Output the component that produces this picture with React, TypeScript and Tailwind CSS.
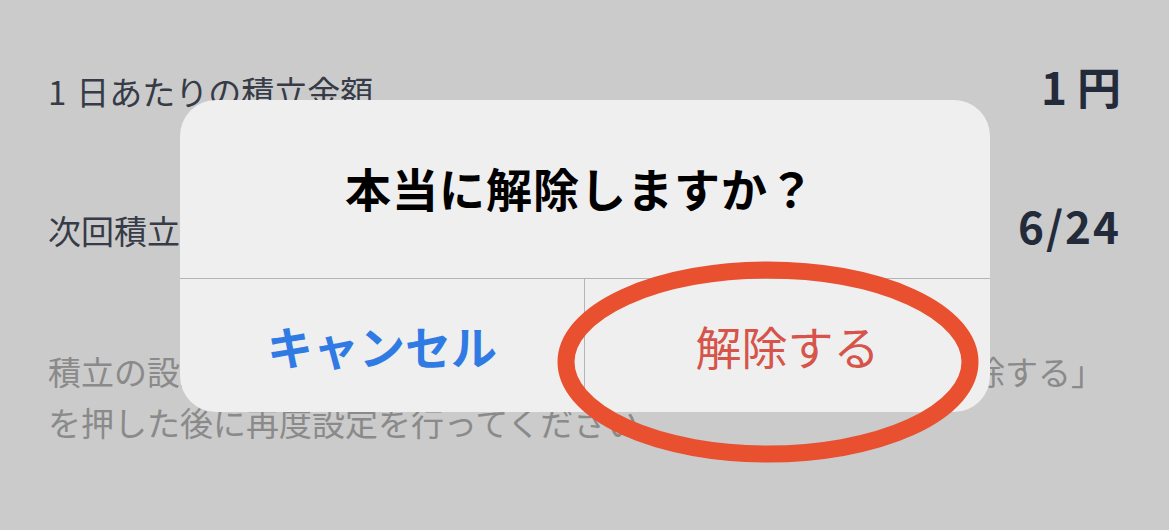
const jp = { fontFamily: '"Noto Sans CJK JP", "Noto Sans", sans-serif' }

export default function App() {
  return (
    <div className="relative h-[530px] w-[1169px] overflow-hidden bg-[#cbcbcb]" style={jp}>
      {/* 積立設定の画面（背景） */}
      <div className="flex flex-col px-12 pt-[61px]">
        <div className="flex h-[50px] items-baseline justify-between">
          <span className="text-[33px] leading-[50px] text-[#363b47]">
            <span className="pr-[10px]">1</span>日あたりの積立金額
          </span>
          <span className="text-[44px] font-bold leading-[50px] text-[#232a3a]">1 円</span>
        </div>
        <div className="mt-[89px] flex h-[50px] items-baseline justify-between">
          <span className="text-[33px] leading-[50px] text-[#363b47]">次回積立日</span>
          <span className="text-[44px] font-bold leading-[50px] tracking-[2px] text-[#232a3a]">6/24</span>
        </div>
        <p className="mt-[96px] whitespace-nowrap text-[33px] leading-[51px] text-[#8a8a8a]">
          積立の設定を変更したい場合は、お手数ですが一度「積立を解除する」
          <br />
          を押した後に再度設定を行ってください。
        </p>
      </div>

      {/* 確認ダイアログ */}
      <div className="absolute left-[180px] top-[100px] flex h-[312px] w-[810px] flex-col overflow-hidden rounded-[36px] bg-[#efefef]">
        <div className="flex h-[179px] items-center justify-center border-b border-[#b4b4b4] pb-[4px]">
          <span className="pr-[10px] text-[46px] font-bold tracking-[1px] text-black">本当に解除しますか？</span>
        </div>
        <div className="grid flex-1 grid-cols-2">
          <button className="flex items-center justify-center border-r border-[#b4b4b4] text-[46px] font-bold text-[#2f7be3]">
            キャンセル
          </button>
          <button className="flex items-center justify-center text-[46px] text-[#d6544a]">解除する</button>
        </div>
      </div>

      {/* 赤丸 */}
      <svg className="pointer-events-none absolute left-0 top-0" width="1169" height="530" viewBox="0 0 1169 530">
        <ellipse cx="768" cy="362" rx="202" ry="92" fill="none" stroke="#e8502f" strokeWidth="17" />
      </svg>
    </div>
  )
}
